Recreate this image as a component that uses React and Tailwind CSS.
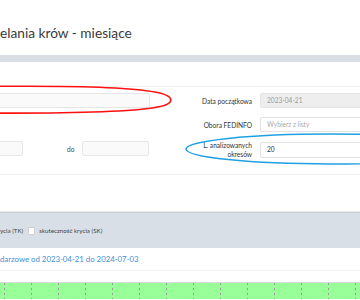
import React from "react";

export default function App() {
  const dots = [4, 31, 58, 85, 112, 139, 166, 193, 220, 247, 274, 301, 328, 355];
  return (
    <div className="relative w-[360px] h-[300px] overflow-hidden bg-white font-['Lato',sans-serif] text-[#333]">
      {/* title */}
      <div className="h-[55px] pt-[24px] text-[13.7px] leading-[17px] text-[#3a3a3a] whitespace-nowrap">
        elania krów - miesiące
      </div>
      <div className="h-[7px] bg-[#dadfe5]" />
      <div className="h-[24px]" />

      {/* form */}
      <div className="h-[89px] border-y border-[#efefef] flex">
        <div className="w-[180px] shrink-0 pt-[6px]">
          <div className="ml-[-10px] w-[160px] h-[15px] bg-[#fafafa] border border-[#e6e6e6] rounded-[2px]" />
          <div className="mt-[33px] flex items-center h-[15px]">
            <div className="ml-[-30px] w-[53px] h-[15px] bg-[#fafafa] border border-[#e6e6e6] rounded-[2px]" />
            <div className="ml-[44px] text-[6.6px] leading-[8px] text-[#444]">do</div>
            <div className="ml-[8px] w-[67px] h-[15px] bg-[#fafafa] border border-[#e6e6e6] rounded-[2px]" />
          </div>
        </div>
        <div className="flex-1 pt-[6px] flex flex-col gap-[9px]">
          <div className="flex items-center h-[15px]">
            <div className="w-[72px] text-right text-[6.6px] leading-[8px] text-[#333] whitespace-nowrap">Data początkowa</div>
            <div className="ml-[8px] w-[120px] shrink-0 h-[15px] bg-[#eeeeee] border border-[#e4e4e4] rounded-[2px] pl-[6px] flex items-center text-[6.6px] text-[#999]">
              2023-04-21
            </div>
          </div>
          <div className="flex items-center h-[15px]">
            <div className="w-[72px] text-right text-[6.6px] leading-[8px] text-[#333] whitespace-nowrap">Obora FEDINFO</div>
            <div className="ml-[8px] w-[120px] shrink-0 h-[15px] bg-white border border-[#e2e2e2] rounded-[2px] pl-[6px] flex items-center text-[6.6px] text-[#aaa]">
              Wybierz z listy
            </div>
          </div>
          <div className="flex items-center h-[16px] mt-[1px]">
            <div className="w-[72px] text-right text-[6.6px] leading-[9px] text-[#333]">
              L. analizowanych
              <br />
              okresów
            </div>
            <div className="ml-[8px] w-[120px] shrink-0 h-[16px] bg-white border border-[#e2e2e2] rounded-[2px] pl-[6px] flex items-center text-[6.6px] text-[#333]">
              20
            </div>
          </div>
        </div>
      </div>

      <div className="h-[37px] border-b border-[#ececec]" />

      {/* grey options bar */}
      <div className="h-[36px] bg-[#d9dfe6] border-t border-[#c6ced6] flex items-center text-[6.2px] text-[#444] whitespace-nowrap">
        <span>ycia (TK)</span>
        <span className="ml-[5px] w-[7px] h-[8px] bg-white border border-[#d0d0d0] rounded-[1px]" />
        <span className="ml-[4px]">skuteczność krycia (SK)</span>
      </div>

      {/* blue heading */}
      <div className="h-[23px] border-b border-[#f1f1f1] flex items-center text-[7.8px] text-[#3d8fd8] whitespace-nowrap pt-[1px]">
        darzowe od 2023-04-21 do 2024-07-03
      </div>
      <div className="h-[11px]" />

      {/* chart */}
      <svg width="360" height="17" className="block">
        <rect x="0" y="0" width="360" height="17" fill="#99ff99" />
        <line x1="0" y1="0.5" x2="360" y2="0.5" stroke="#d6dcd6" strokeWidth="1" />
        {dots.map((x) => (
          <line key={x} x1={x + 0.5} y1="1" x2={x + 0.5} y2="17" stroke="#9a9a9a" strokeWidth="1" strokeDasharray="2 3" />
        ))}
      </svg>

      {/* annotations */}
      <svg width="360" height="300" className="absolute left-0 top-0 pointer-events-none">
        <path
          d="M -20 86.5 C 60 85.5 125 86.5 155 92 C 176 96 176 104 155 107.5 C 125 112.5 60 113.5 -20 113"
          fill="none"
          stroke="#ff1010"
          strokeWidth="1.6"
        />
        <ellipse cx="330" cy="149" rx="144" ry="15" fill="none" stroke="#1ea0e2" strokeWidth="1.5" />
      </svg>
    </div>
  );
}
